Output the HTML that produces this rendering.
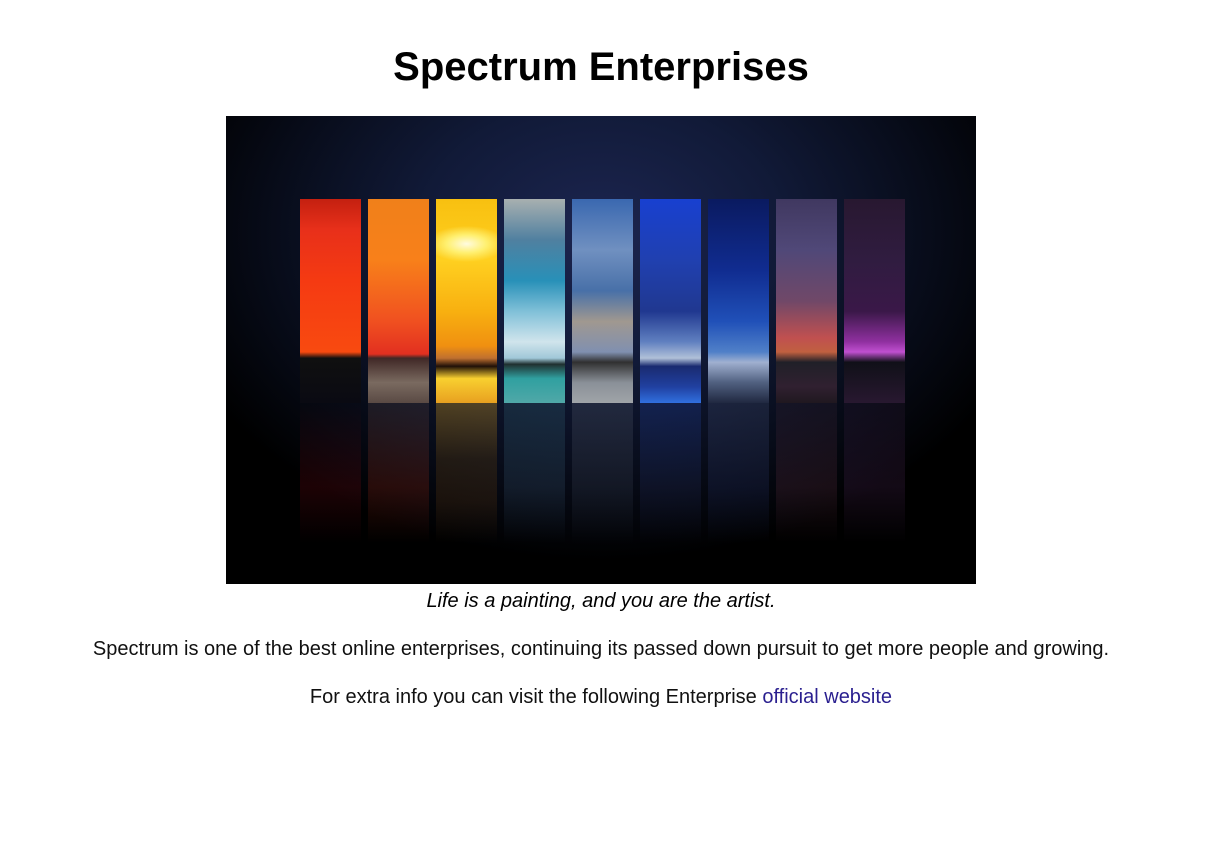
<!DOCTYPE html>
<html><head><meta charset="utf-8"><style>
body{margin:0;background:#fff;font-family:"Liberation Sans",Arial,sans-serif;color:#111;}
h1{position:absolute;left:0;width:1202px;top:44px;margin:0;text-align:center;font-size:40px;font-weight:bold;line-height:46px;color:#000;}
.img{position:absolute;left:226px;top:116px;width:750px;height:468px;overflow:hidden;
background:radial-gradient(ellipse 60% 70% at 50% 25%,#1c2550 0%,#111a38 40%,#070b18 75%,#000 100%);}
.p{position:absolute;top:83px;width:61px;height:204px;}
.r{position:absolute;top:287px;width:61px;height:140px;opacity:.3;}
p{position:absolute;left:0;width:1202px;text-align:center;margin:0;font-size:20px;}
a{color:#2a1f8f;text-decoration:none;}
</style></head><body>
<h1>Spectrum Enterprises</h1>
<div class="img">
<div class="p" style="left:74px;background:linear-gradient(#c42010 0%,#e8301a 15%,#f53a12 40%,#f84a10 75%,#101010 78%,#0a0a12 100%)"></div>
<div class="p" style="left:142px;background:linear-gradient(#f0801a 0%,#f8801a 30%,#f05020 60%,#e23020 76%,#402826 78%,#7a6a60 90%,#5a4a44 100%)"></div>
<div class="p" style="left:210px;background:radial-gradient(ellipse 40px 18px at 50% 22%,#fffbe0 0%,#fff070 50%,transparent 100%),linear-gradient(#f8c010 0%,#ffd020 30%,#f8b010 55%,#f09010 72%,#c07030 78%,#201008 82%,#f8d030 88%,#e8a020 100%)"></div>
<div class="p" style="left:278px;background:linear-gradient(#a8b0b0 0%,#5080a0 20%,#2890b8 40%,#80c0d8 55%,#d0e4ec 70%,#a0c8d8 78%,#203030 81%,#30a0a0 88%,#50a8a8 100%)"></div>
<div class="p" style="left:346px;background:linear-gradient(#3a68b0 0%,#7090c0 25%,#4870a8 45%,#a09890 60%,#8090b0 75%,#303030 80%,#8a9098 90%,#a0a4a8 100%)"></div>
<div class="p" style="left:414px;background:linear-gradient(#1840d0 0%,#2040b0 30%,#203890 55%,#6080c0 70%,#b0c0d8 78%,#1a2a70 82%,#2040a0 92%,#3070e0 100%)"></div>
<div class="p" style="left:482px;background:linear-gradient(#0a1a60 0%,#102c90 35%,#2050b8 60%,#5080c8 75%,#a0b0d0 80%,#506080 90%,#202840 100%)"></div>
<div class="p" style="left:550px;background:linear-gradient(#403860 0%,#504878 25%,#704868 50%,#c05050 68%,#c06040 75%,#202028 80%,#302030 92%,#201820 100%)"></div>
<div class="p" style="left:618px;background:linear-gradient(#281830 0%,#301c40 30%,#3a1848 55%,#9030a0 70%,#c050d0 75%,#101018 80%,#281830 100%)"></div>
<div class="r" style="left:74px;background:linear-gradient(#0a0a12,#600810 60%,transparent)"></div>
<div class="r" style="left:142px;background:linear-gradient(#504040,#802010 60%,transparent)"></div>
<div class="r" style="left:210px;background:linear-gradient(#f0b020,#604010 40%,#503010 70%,transparent)"></div>
<div class="r" style="left:278px;background:linear-gradient(#306070,#304860 60%,transparent)"></div>
<div class="r" style="left:346px;background:linear-gradient(#505868,#303848 60%,transparent)"></div>
<div class="r" style="left:414px;background:linear-gradient(#2040a0,#202850 60%,transparent)"></div>
<div class="r" style="left:482px;background:linear-gradient(#404c70,#202a58 60%,transparent)"></div>
<div class="r" style="left:550px;background:linear-gradient(#302030,#502838 60%,transparent)"></div>
<div class="r" style="left:618px;background:linear-gradient(#281830,#402048 60%,transparent)"></div>
</div>
<p style="top:590px;font-style:italic;color:#000;">Life is a painting, and you are the artist.</p>
<p style="top:638px;">Spectrum is one of the best online enterprises, continuing its passed down pursuit to get more people and growing.</p>
<p style="top:686px;">For extra info you can visit the following Enterprise <a href="#">official website</a></p>
</body></html>
